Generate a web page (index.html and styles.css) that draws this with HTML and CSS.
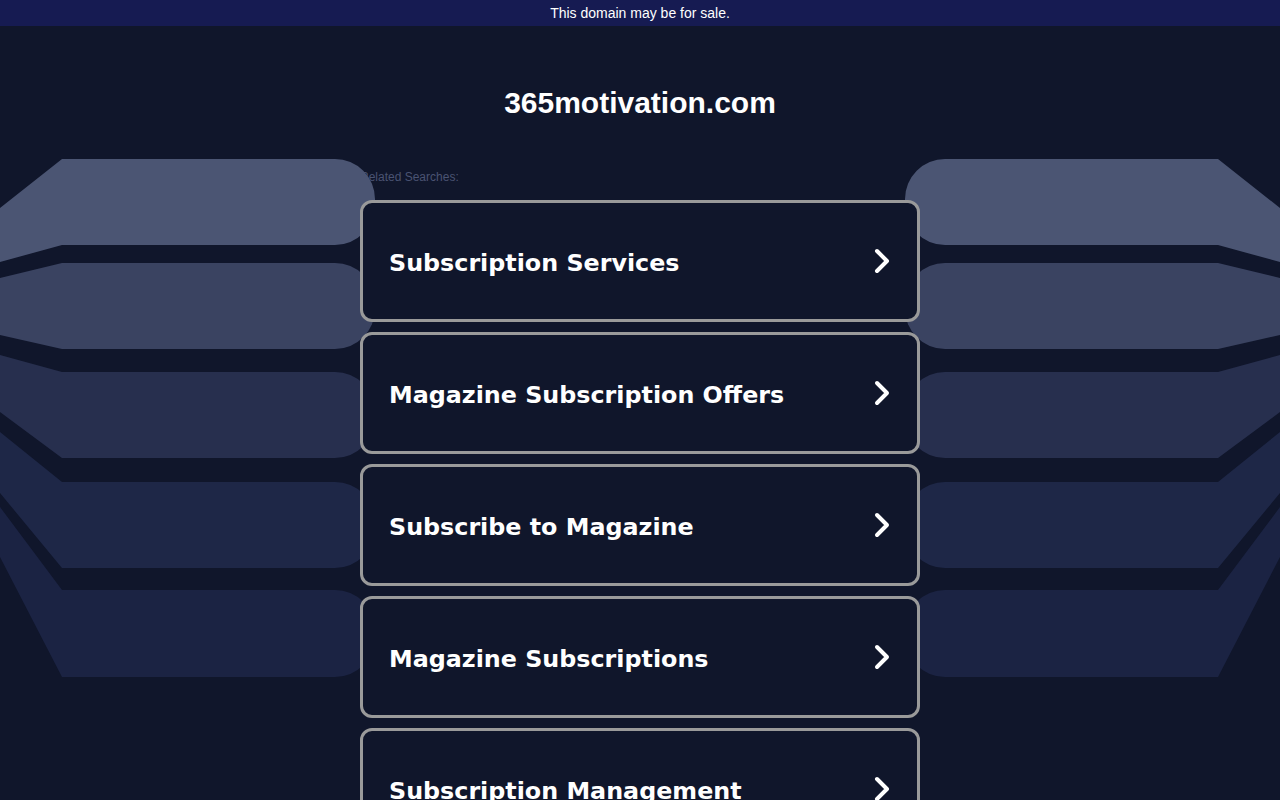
FILE: index.html
```html
<!DOCTYPE html>
<html lang="en">
<head>
<meta charset="utf-8">
<title>365motivation.com</title>
<link rel="stylesheet" href="styles.css">
</head>
<body>
<div class="topbar">This domain may be for sale.</div>
<svg class="bg" width="1280" height="800" viewBox="0 0 1280 800" aria-hidden="true">
  <g>
    <path fill="#4b5573" d="M0,208 L62,159 L335,159 A40,40 0 0 1 375,199 L375,205 A40,40 0 0 1 335,245 L62,245 L0,262 Z"/>
    <path fill="#3a4361" d="M0,278 L62,263 L335,263 A40,40 0 0 1 375,303 L375,309 A40,40 0 0 1 335,349 L62,349 L0,335 Z"/>
    <path fill="#272f4e" d="M0,355 L62,372 L335,372 A40,40 0 0 1 375,412 L375,418 A40,40 0 0 1 335,458 L62,458 L0,412 Z"/>
    <path fill="#1e2747" d="M0,432 L62,482 L335,482 A40,40 0 0 1 375,522 L375,528 A40,40 0 0 1 335,568 L62,568 L0,493 Z"/>
    <path fill="#1b2343" d="M0,507 L62,590 L335,590 A40,40 0 0 1 375,630 L375,637 A40,40 0 0 1 335,677 L62,677 L0,557 Z"/>
  </g>
  <g transform="translate(1280,0) scale(-1,1)">
    <path fill="#4b5573" d="M0,208 L62,159 L335,159 A40,40 0 0 1 375,199 L375,205 A40,40 0 0 1 335,245 L62,245 L0,262 Z"/>
    <path fill="#3a4361" d="M0,278 L62,263 L335,263 A40,40 0 0 1 375,303 L375,309 A40,40 0 0 1 335,349 L62,349 L0,335 Z"/>
    <path fill="#272f4e" d="M0,355 L62,372 L335,372 A40,40 0 0 1 375,412 L375,418 A40,40 0 0 1 335,458 L62,458 L0,412 Z"/>
    <path fill="#1e2747" d="M0,432 L62,482 L335,482 A40,40 0 0 1 375,522 L375,528 A40,40 0 0 1 335,568 L62,568 L0,493 Z"/>
    <path fill="#1b2343" d="M0,507 L62,590 L335,590 A40,40 0 0 1 375,630 L375,637 A40,40 0 0 1 335,677 L62,677 L0,557 Z"/>
  </g>
</svg>
<main class="content">
  <h1 class="domain">365motivation.com</h1>
  <div class="related">Related Searches:</div>
  <ul class="links">
    <li><a class="card" href="#"><span class="label">Subscription Services</span><svg class="chev" width="18" height="26" viewBox="0 0 18 26"><polyline points="4,3 14,13 4,23" fill="none" stroke="#fff" stroke-width="4" stroke-linecap="round" stroke-linejoin="round"/></svg></a></li>
    <li><a class="card" href="#"><span class="label">Magazine Subscription Offers</span><svg class="chev" width="18" height="26" viewBox="0 0 18 26"><polyline points="4,3 14,13 4,23" fill="none" stroke="#fff" stroke-width="4" stroke-linecap="round" stroke-linejoin="round"/></svg></a></li>
    <li><a class="card" href="#"><span class="label">Subscribe to Magazine</span><svg class="chev" width="18" height="26" viewBox="0 0 18 26"><polyline points="4,3 14,13 4,23" fill="none" stroke="#fff" stroke-width="4" stroke-linecap="round" stroke-linejoin="round"/></svg></a></li>
    <li><a class="card" href="#"><span class="label">Magazine Subscriptions</span><svg class="chev" width="18" height="26" viewBox="0 0 18 26"><polyline points="4,3 14,13 4,23" fill="none" stroke="#fff" stroke-width="4" stroke-linecap="round" stroke-linejoin="round"/></svg></a></li>
    <li><a class="card" href="#"><span class="label">Subscription Management</span><svg class="chev" width="18" height="26" viewBox="0 0 18 26"><polyline points="4,3 14,13 4,23" fill="none" stroke="#fff" stroke-width="4" stroke-linecap="round" stroke-linejoin="round"/></svg></a></li>
  </ul>
</main>
</body>
</html>
```

FILE: styles.css
```css
html, body {
  margin: 0;
  padding: 0;
}
body {
  background: #10162b;
  font-family: "Liberation Sans", Arial, sans-serif;
  color: #fff;
  overflow: hidden;
  height: 800px;
  position: relative;
}
.topbar {
  height: 26px;
  line-height: 26px;
  background: #161b52;
  color: #fff;
  font-size: 14px;
  text-align: center;
}
.bg {
  position: absolute;
  top: 0;
  left: 0;
  z-index: 1;
  pointer-events: none;
}
.content {
  width: 560px;
  margin: 0 auto;
}
.domain {
  margin: 60px 0 0;
  font-size: 30px;
  line-height: 34px;
  font-weight: bold;
  text-align: center;
  color: #fff;
}
.related {
  margin-top: 50px;
  font-size: 12px;
  line-height: 14px;
  color: #4a5372;
  position: relative;
  z-index: 0;
}
.links {
  list-style: none;
  margin: 16px 0 0;
  padding: 0;
  display: flex;
  flex-direction: column;
  gap: 10px;
}
.card {
  position: relative;
  z-index: 2;
  box-sizing: border-box;
  height: 122px;
  display: flex;
  align-items: center;
  justify-content: space-between;
  padding: 0 26px 0 26px;
  background: #10162b;
  border: 3px solid #9a9a9a;
  border-radius: 12px;
  text-decoration: none;
  color: #fff;
}
.label {
  font-family: "DejaVu Sans", Verdana, sans-serif;
  font-weight: bold;
  font-size: 23.8px;
  padding-top: 4px;
  color: #fff;
}
.chev {
  display: block;
}
```
